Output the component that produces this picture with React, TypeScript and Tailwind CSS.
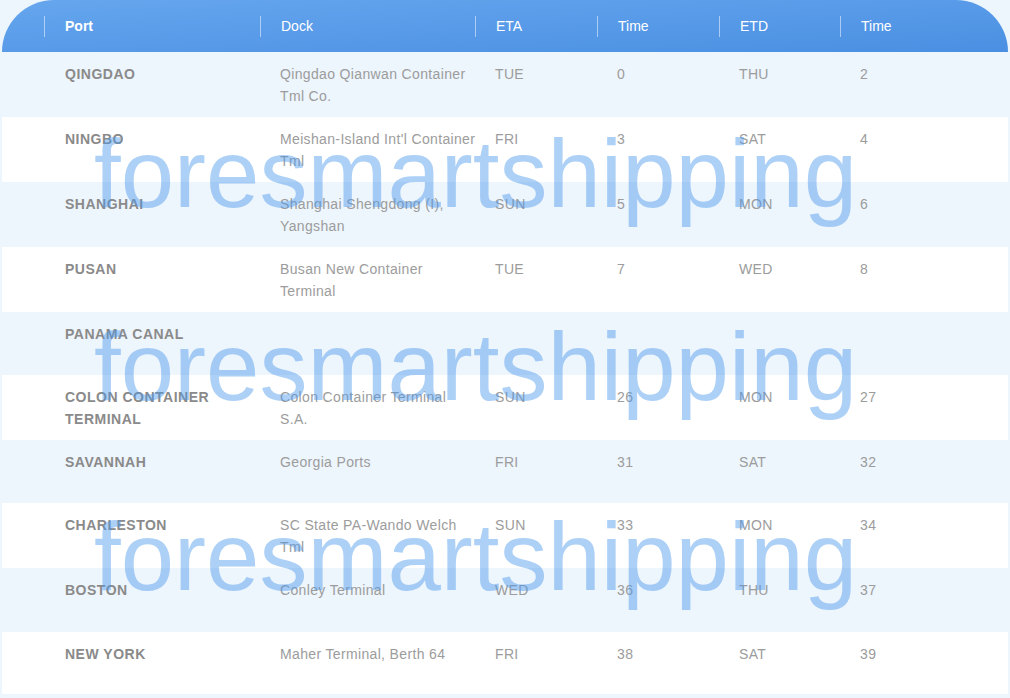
const rows = [
  { port: ["QINGDAO"], dock: ["Qingdao Qianwan Container", "Tml Co."], eta: "TUE", t1: "0", etd: "THU", t2: "2", h: "h-[65px]" },
  { port: ["NINGBO"], dock: ["Meishan-Island Int'l Container", "Tml"], eta: "FRI", t1: "3", etd: "SAT", t2: "4", h: "h-[65px]" },
  { port: ["SHANGHAI"], dock: ["Shanghai Shengdong (I),", "Yangshan"], eta: "SUN", t1: "5", etd: "MON", t2: "6", h: "h-[65px]" },
  { port: ["PUSAN"], dock: ["Busan New Container", "Terminal"], eta: "TUE", t1: "7", etd: "WED", t2: "8", h: "h-[65px]" },
  { port: ["PANAMA CANAL"], dock: [], eta: "", t1: "", etd: "", t2: "", h: "h-[63px]" },
  { port: ["COLON CONTAINER", "TERMINAL"], dock: ["Colon Container Terminal", "S.A."], eta: "SUN", t1: "26", etd: "MON", t2: "27", h: "h-[65px]" },
  { port: ["SAVANNAH"], dock: ["Georgia Ports"], eta: "FRI", t1: "31", etd: "SAT", t2: "32", h: "h-[63px]" },
  { port: ["CHARLESTON"], dock: ["SC State PA-Wando Welch", "Tml"], eta: "SUN", t1: "33", etd: "MON", t2: "34", h: "h-[65px]" },
  { port: ["BOSTON"], dock: ["Conley Terminal"], eta: "WED", t1: "36", etd: "THU", t2: "37", h: "h-[64px]" },
  { port: ["NEW YORK"], dock: ["Maher Terminal, Berth 64"], eta: "FRI", t1: "38", etd: "SAT", t2: "39", h: "h-[62px]" },
];

const cols = "grid grid-cols-[43px_215px_215px_122px_122px_121px_1fr]";

function Lines({ lines, className }: { lines: string[]; className: string }) {
  return (
    <div className={`pl-5 pt-[11px] ${className}`}>
      {lines.map((l) => (
        <div key={l} className="whitespace-nowrap leading-[22px]">
          {l}
        </div>
      ))}
    </div>
  );
}

export default function App() {
  const heads = ["Port", "Dock", "ETA", "Time", "ETD", "Time"];
  const body = "tracking-[0.35px] text-[#9c9c9c]";

  return (
    <div className="min-h-screen bg-[#edf5fd] px-[2px] font-['Liberation_Sans',Arial,sans-serif] text-[14px]">
      <div className="relative">
        {/* header */}
        <div className={`grid grid-cols-[42px_216px_215px_122px_122px_121px_1fr] h-[52px] items-center rounded-t-[54px] bg-gradient-to-br from-[#66a6ee] to-[#4a8fe2] text-white`}>
          <div />
          {heads.map((h, i) => (
            <div key={i} className="flex h-[21px] items-center border-l border-white/50 pl-5 leading-[22px]">
              <span className={i === 0 ? "font-bold" : ""}>{h}</span>
            </div>
          ))}
        </div>

        {/* body */}
        {rows.map((r, i) => (
          <div key={i} className={`${cols} ${r.h} ${i % 2 === 1 ? "bg-white" : ""}`}>
            <div />
            <Lines lines={r.port} className="font-bold tracking-[0.5px] text-[#8a8a8a]" />
            <Lines lines={r.dock} className={body} />
            <Lines lines={r.eta ? [r.eta] : []} className={body} />
            <Lines lines={r.t1 ? [r.t1] : []} className={body} />
            <Lines lines={r.etd ? [r.etd] : []} className={body} />
            <Lines lines={r.t2 ? [r.t2] : []} className={body} />
          </div>
        ))}

        {/* watermark */}
        <div className="pointer-events-none absolute left-[92px] top-[126px] whitespace-nowrap text-[96px] leading-[96px] text-[rgba(74,150,236,0.45)]">
          foresmartshipping
        </div>
        <div className="pointer-events-none absolute left-[92px] top-[319px] whitespace-nowrap text-[96px] leading-[96px] text-[rgba(74,150,236,0.45)]">
          foresmartshipping
        </div>
        <div className="pointer-events-none absolute left-[92px] top-[509px] whitespace-nowrap text-[96px] leading-[96px] text-[rgba(74,150,236,0.45)]">
          foresmartshipping
        </div>
      </div>
    </div>
  );
}
